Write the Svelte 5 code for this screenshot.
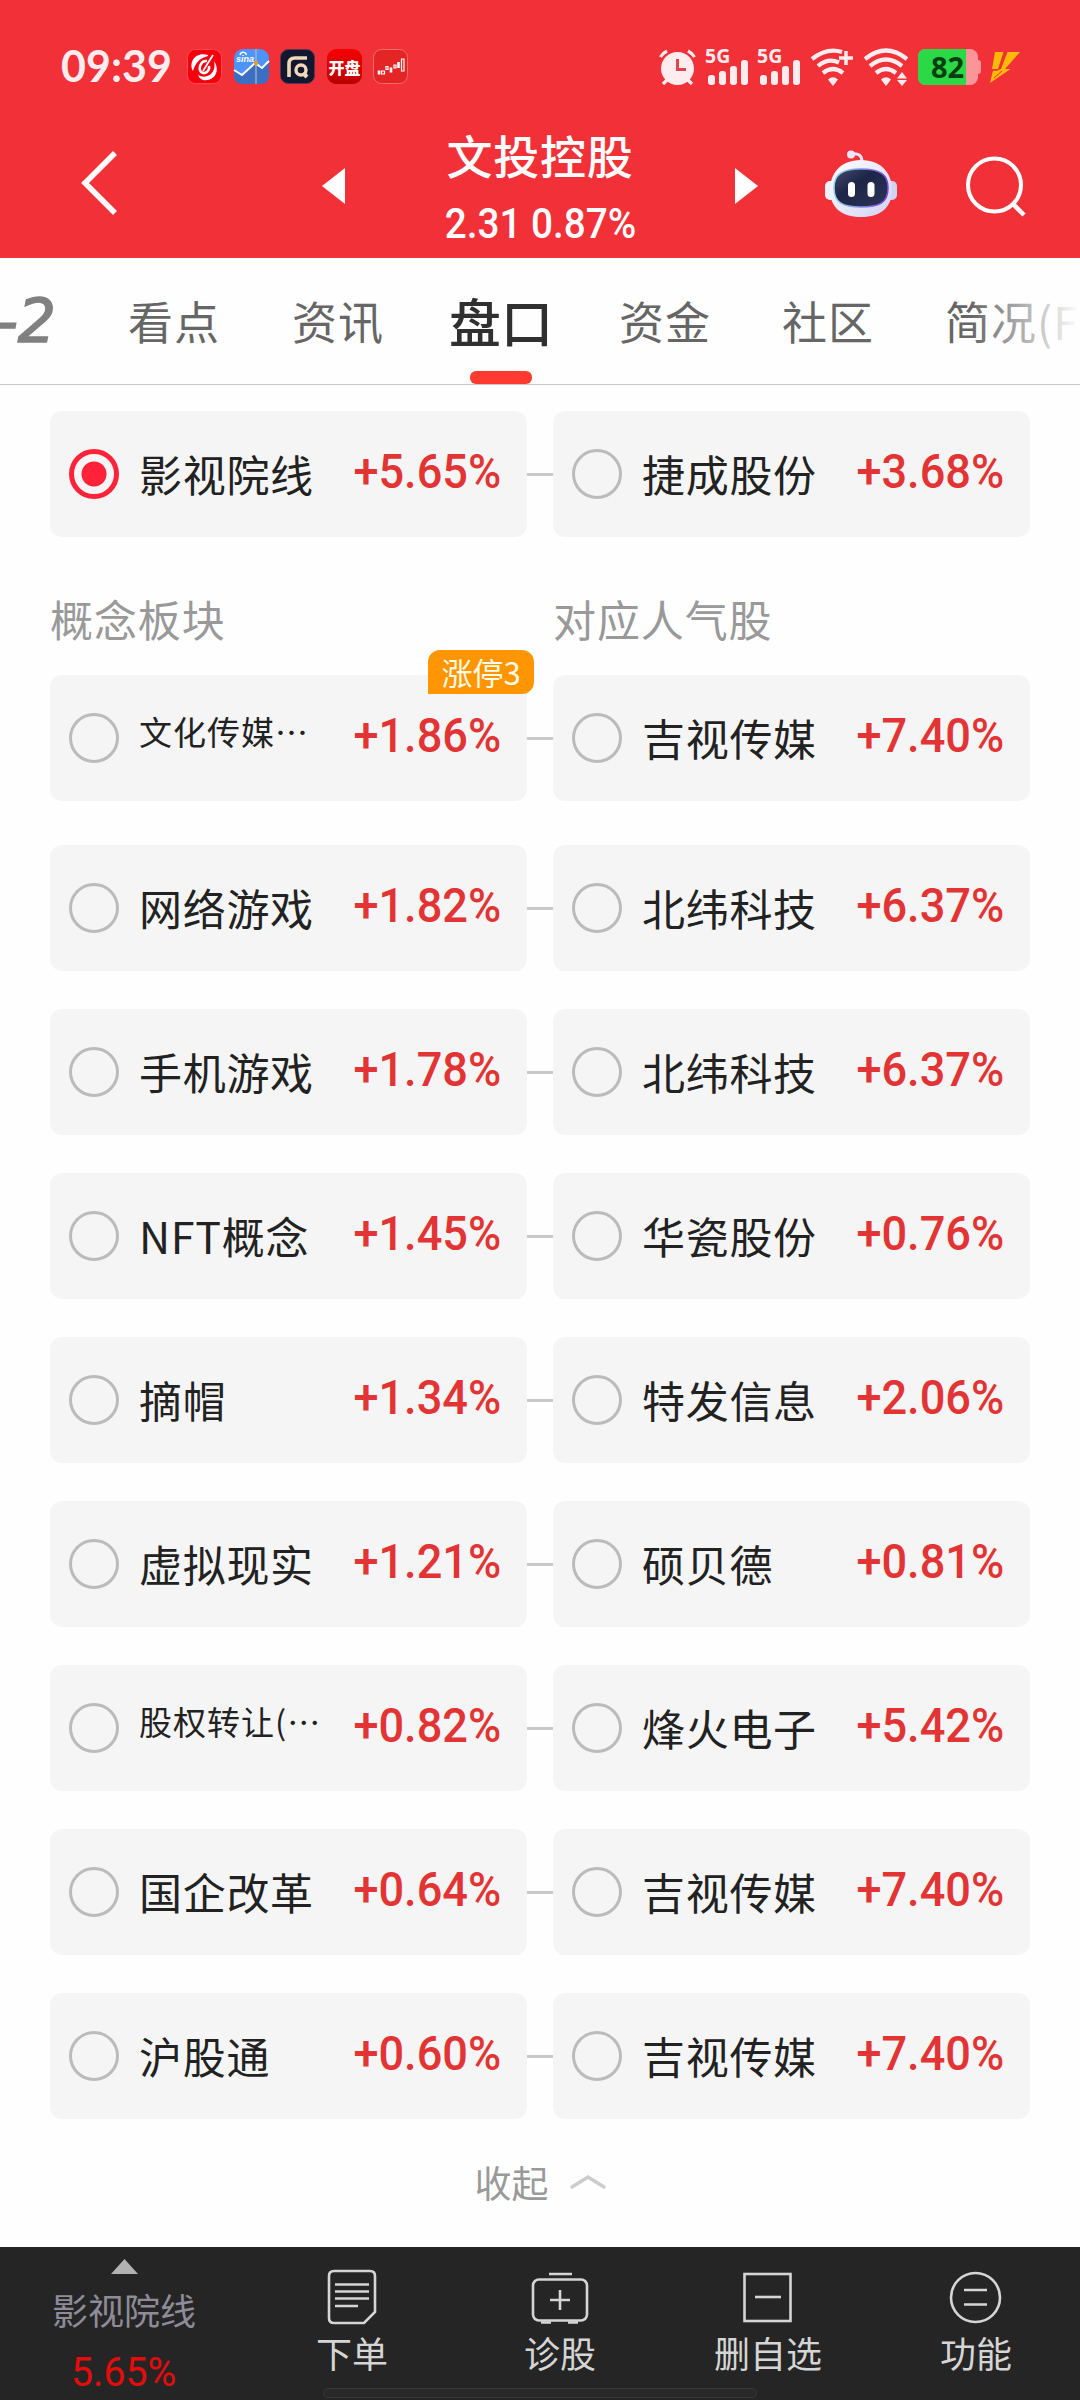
<script>
    // Sector + leading stock pairs, in display order
    const top = { name: '影视院线', pct: '+5.65%', stock: '捷成股份', stockPct: '+3.68%', active: true };

    const concepts = [
        { name: '文化传媒⋯', pct: '+1.86%', stock: '吉视传媒', stockPct: '+7.40%', small: true, badge: '涨停3' },
        { name: '网络游戏', pct: '+1.82%', stock: '北纬科技', stockPct: '+6.37%' },
        { name: '手机游戏', pct: '+1.78%', stock: '北纬科技', stockPct: '+6.37%' },
        { name: 'NFT概念', pct: '+1.45%', stock: '华瓷股份', stockPct: '+0.76%' },
        { name: '摘帽', pct: '+1.34%', stock: '特发信息', stockPct: '+2.06%' },
        { name: '虚拟现实', pct: '+1.21%', stock: '硕贝德', stockPct: '+0.81%' },
        { name: '股权转让(⋯', pct: '+0.82%', stock: '烽火电子', stockPct: '+5.42%', small: true },
        { name: '国企改革', pct: '+0.64%', stock: '吉视传媒', stockPct: '+7.40%' },
        { name: '沪股通', pct: '+0.60%', stock: '吉视传媒', stockPct: '+7.40%' }
    ];

    const tabs = ['看点', '资讯', '盘口', '资金', '社区', '简况(F'];
    const current = '盘口';
</script>

{#snippet card(name, pct, active, small, badge)}
    <div class="card">
        <span class="radio" class:active></span>
        <span class="name" class:small>{name}</span>
        <span class="pct"><span class="num">{pct}</span></span>
        {#if badge}<span class="badge">{badge}</span>{/if}
    </div>
{/snippet}

{#snippet pair(item)}
    <div class="pair">
        {@render card(item.name, item.pct, item.active, item.small, item.badge)}
        <span class="link"></span>
        {@render card(item.stock, item.stockPct, false, false, null)}
    </div>
{/snippet}

{#snippet signal()}
    <svg class="signal" width="42" height="36" viewBox="0 0 42 36">
        <text x="-1" y="14" class="net">5G</text>
        <rect x="2" y="26" width="7" height="10" rx="3" />
        <rect x="13" y="22" width="7" height="14" rx="3" />
        <rect x="24" y="17" width="7" height="19" rx="3" />
        <rect x="35" y="11" width="7" height="25" rx="3" />
    </svg>
{/snippet}

<div class="screen">
    <!-- Red header: status bar and stock title -->
    <header>
        <div class="status">
            <span class="clock">09:39</span>
            <div class="apps">
                <svg width="35" height="35" viewBox="0 0 35 35">
                    <rect x=".5" y=".5" width="34" height="34" rx="8" fill="#f5000f" stroke="#ff4a4a" />
                    <path d="M21 6 C9 2 1 13 6 22 C8 15 12 9 21 7Z" fill="#fff" />
                    <path d="M11 26 C20 31 30 24 27 12 C34 22 27 33 16 31 C13 30 12 28 11 26Z" fill="#fff" />
                    <path d="M20 12 C14 11 11 19 14 23 C18 26 23 22 22 17" fill="none" stroke="#fff" stroke-width="2.500" />
                    <path d="M26 6 L16 22" fill="none" stroke="#fff" stroke-width="1.800" />
                </svg>
                <svg width="35" height="35" viewBox="0 0 35 35">
                    <rect width="35" height="35" rx="9" fill="#4c94fb" />
                    <path d="M0 21 L8 26 L21 14 L28 19 L35 12 V26 Q35 35 26 35 H9 Q0 35 0 26Z" fill="#3a6fc4" />
                    <path d="M0 21 L8 26 L21 14 L28 19 L35 12" fill="none" stroke="#fff" stroke-width="2" />
                    <path d="M22 0V35" stroke="#c9c5b0" />
                    <circle cx="22" cy="14" r="2.200" fill="#f39a1e" />
                    <path d="M6 6c1-4 7-3 6 0" fill="none" stroke="#fff" stroke-width="1.500" />
                    <text x="2" y="13" class="sina">sina</text>
                </svg>
                <svg width="35" height="35" viewBox="0 0 35 35">
                    <rect x=".5" y=".5" width="34" height="34" rx="8" fill="#10182f" stroke="#5c3350" />
                    <path d="M9 28V15Q9 9 15 9H27" fill="none" stroke="#f3d5b9" stroke-width="3.600" />
                    <circle cx="21" cy="21" r="5" fill="none" stroke="#f3d5b9" stroke-width="3.400" />
                    <path d="M23 24 L27 28" stroke="#f3d5b9" stroke-width="4" />
                </svg>
                <svg width="35" height="35" viewBox="0 0 35 35">
                    <defs>
                        <linearGradient id="kp" x1="0" y1="0" x2="0" y2="1">
                            <stop offset="0" stop-color="#f80000" />
                            <stop offset="1" stop-color="#b80000" />
                        </linearGradient>
                    </defs>
                    <rect width="35" height="35" rx="9" fill="url(#kp)" />
                    <text x="17.500" y="25" text-anchor="middle" class="kaipan">开盘</text>
                </svg>
                <svg width="35" height="35" viewBox="0 0 35 35">
                    <rect x=".5" y=".5" width="34" height="34" rx="8" fill="#e42526" stroke="#f56a6a" />
                    <path d="M6 21.500v4M18 18.500v5M25.500 13v6" stroke="#fff" stroke-width="2.600" />
                    <path d="M8.500 22h3v3h-3zM13 17.500h2v3h-2zM21 16h2v3h-2zM28.500 10h2.500v12h-2.500z" fill="none" stroke="#fff" stroke-width="1.200" />
                </svg>
            </div>

            <div class="sys">
                <svg class="alarm" width="37" height="37" viewBox="0 0 37 37">
                    <circle cx="18.500" cy="19.500" r="16.500" fill="#ffecee" />
                    <path d="M1.500 8 Q4 4 8 2 M35.500 8 Q33 4 29 2 M4 35 L9 30 M33 35 L28 30" stroke="#ffecee" stroke-width="3.200" fill="none" />
                    <path d="M18.500 10V20.500H27" stroke="#e2444c" stroke-width="3" fill="none" />
                </svg>
                {@render signal()}
                {@render signal()}
                <svg class="wifi" width="43" height="37" viewBox="0 0 43 37">
                    <path d="M1 10 Q16 -2 31 3 M7 17 Q17 8.500 28 13.500 M12 24 Q22 16 32 24" fill="none" stroke="#ffecee" stroke-width="4.200" />
                    <path d="M17 30.500 Q22 26 27 30.500 L22 37Z" fill="#ffecee" />
                    <path d="M28 9H42M35 2V16" stroke="#ffecee" stroke-width="3.500" />
                </svg>
                <svg class="wifi2" width="45" height="37" viewBox="0 0 45 37">
                    <path d="M1 10 Q22 -7 43 10 M6 17 Q22 4 38 17 M12 24 Q22 16 32 24" fill="none" stroke="#ffecee" stroke-width="4.200" />
                    <path d="M17 30.500 Q22 26 27 30.500 L22 37Z M33 29.500 L38 23 L43 29.500Z M33 31 H43 L38 37Z" fill="#ffecee" />
                </svg>
                <svg class="battery" width="64" height="36" viewBox="0 0 64 36">
                    <rect width="60" height="36" rx="8" fill="#fb9599" />
                    <rect x="57" y="11" width="6" height="14" rx="3" fill="#fb9599" />
                    <path d="M8 0H48V36H8Q0 36 0 28V8Q0 0 8 0Z" fill="#2bd845" />
                    <text x="29.500" y="28.500" text-anchor="middle" class="level">82</text>
                </svg>
                <svg class="bolt" width="30" height="31" viewBox="0 0 30 31">
                    <path d="M5 0H13.500L8 17H2Z M17.500 0H30L15 17H20.500L0 31L3 18.500H7L11 17Z" fill="#ffb907" />
                    <path d="M3 18H8M12 19L4 26" stroke="#f12f38" stroke-width="1" />
                </svg>
            </div>
        </div>

        <div class="title-bar">
            <svg class="back" width="37" height="66" viewBox="0 0 37 66">
                <path d="M34 3 L4 33 L34 63" fill="none" stroke="#fff" stroke-width="5.500" />
            </svg>
            <svg class="prev" width="23" height="36" viewBox="0 0 23 36"><path d="M23 0V36L0 18Z" fill="#fff" /></svg>
            <div class="stock">
                <h1>文投控股</h1>
                <p><span class="num">2.31 0.87%</span></p>
            </div>
            <svg class="next" width="23" height="36" viewBox="0 0 23 36"><path d="M0 0V36L23 18Z" fill="#fff" /></svg>
            <svg class="robot" width="72" height="68" viewBox="0 0 72 68">
                <defs>
                    <linearGradient id="shell" x1="0" y1="0" x2="1" y2="1">
                        <stop offset="0" stop-color="#ffffff" />
                        <stop offset="1" stop-color="#d3d2f3" />
                    </linearGradient>
                    <linearGradient id="rim" x1="0" y1="0" x2="1" y2="0">
                        <stop offset="0" stop-color="#8fd4f5" />
                        <stop offset="1" stop-color="#7b46dc" />
                    </linearGradient>
                    <linearGradient id="visor" x1="0" y1="0" x2="1" y2="1">
                        <stop offset="0" stop-color="#454d70" />
                        <stop offset=".4" stop-color="#1d2647" />
                        <stop offset="1" stop-color="#2c3458" />
                    </linearGradient>
                </defs>
                <path d="M26 4 Q37 2 37 12" fill="none" stroke="#e9e6fa" stroke-width="3" />
                <circle cx="26" cy="4.500" r="4" fill="#e9e6fa" />
                <rect x="0" y="31" width="12" height="19" rx="5" fill="#f0f0ff" />
                <rect x="60" y="31" width="12" height="19" rx="5" fill="#d2d0f3" />
                <path d="M36 10 C57 10 67 24 67 40 C67 57 56 67 36 67 C16 67 5 57 5 40 C5 24 15 10 36 10Z" fill="url(#shell)" />
                <path d="M36 19 C56 19 63 25 63 38 C63 53 54 57 36 57 C18 57 9 53 9 38 C9 25 16 19 36 19Z" fill="url(#visor)" stroke="url(#rim)" stroke-width="1.500" />
                <rect x="23" y="32" width="7" height="15" rx="3.500" fill="#fff" />
                <rect x="42.500" y="32" width="7" height="15" rx="3.500" fill="#fff" />
            </svg>
            <svg class="search" width="60" height="62" viewBox="0 0 60 62">
                <circle cx="28.500" cy="29" r="26.500" fill="none" stroke="#fff" stroke-width="4" />
                <path d="M47 48 L58 59" stroke="#fff" stroke-width="4.500" />
            </svg>
        </div>
    </header>

    <!-- Section tabs -->
    <nav class="tabs">
        <span class="level2">-2</span>
        {#each tabs as tab}
            <span class="tab" class:current={tab === current}>{tab}</span>
        {/each}
    </nav>

    <main>
        {@render pair(top)}

        <div class="labels">
            <span>概念板块</span>
            <span>对应人气股</span>
        </div>

        <div class="list">
            {#each concepts as item}
                {@render pair(item)}
            {/each}
        </div>

        <div class="collapse">
            <span>收起</span>
            <svg width="36" height="14" viewBox="0 0 36 14">
                <path d="M2 12 L18 2 L34 12" fill="none" stroke="#ccc" stroke-width="3.500" stroke-linecap="round" />
            </svg>
        </div>
    </main>

    <!-- Bottom toolbar -->
    <footer>
        <div class="sector">
            <svg width="27" height="15" viewBox="0 0 27 15"><path d="M13.500 0L27 15H0Z" fill="#b2b2b2" /></svg>
            <span class="sector-name">影视院线</span>
            <span class="sector-pct"><span class="num">5.65%</span></span>
        </div>
        <div class="tool">
            <svg width="58" height="56" viewBox="0 0 58 56">
                <path d="M11 2H47Q52 2 52 7V43L41 54H11Q6 54 6 49V7Q6 2 11 2Z" />
                <path d="M12 15.500H46M12 22.500H46M12 29.500H46M12 37H35" />
            </svg>
            <span>下单</span>
        </div>
        <div class="tool">
            <svg width="58" height="56" viewBox="0 0 58 56">
                <rect x="2" y="10.500" width="54" height="41" rx="6" />
                <path d="M18 5H41M29 21V41M19 31H39" />
                <path d="M10 53.500H20M37 53.500H47" />
            </svg>
            <span>诊股</span>
        </div>
        <div class="tool">
            <svg width="58" height="56" viewBox="0 0 58 56">
                <rect x="5.500" y="5" width="46" height="47" />
                <path d="M16 28H42" />
            </svg>
            <span>删自选</span>
        </div>
        <div class="tool">
            <svg width="58" height="56" viewBox="0 0 58 56">
                <circle cx="28.500" cy="28.500" r="24.500" />
                <path d="M17 21H40M17 35.500H40" />
            </svg>
            <span>功能</span>
        </div>
        <div class="home"></div>
    </footer>
</div>

<style>
    :global(body) {
        margin: 0;
        background: #fff;
    }

    .screen {
        width: 1080px;
        height: 2400px;
        overflow: hidden;
        display: flex;
        flex-direction: column;
        background: #fefefe;
        font-family: Roboto, "Noto Sans CJK SC", sans-serif;
        color: #222;
    }

    svg { display: block; flex-shrink: 0; overflow: visible; }

    /* DIN-like narrow figures */
    .num {
        display: inline-block;
        font-family: Roboto, sans-serif;
        white-space: nowrap;
    }

    /* ===== HEADER ===== */
    header {
        height: 258px;
        flex-shrink: 0;
        background: #f23038;
    }

    .status {
        height: 134px;
        box-sizing: border-box;
        padding: 49px 60px 0 61px;
        display: flex;
        align-items: flex-start;
    }

    .clock {
        width: 126px;
        font: 700 43px/34px Lato, sans-serif;
        color: #ffecee;
    }

    .apps { display: flex; gap: 11.5px; }

    .sina { font: italic 700 9px "Liberation Sans", sans-serif; fill: #fff; }
    .kaipan { font: 900 16px "Noto Sans CJK SC", sans-serif; fill: #fff; }

    .sys { margin-left: auto; display: flex; }
    .signal { margin-left: 10px; fill: #ffecee; }
    .net { font: 700 19.5px "Noto Sans", sans-serif; }
    .wifi { margin-left: 11px; }
    .wifi2 { margin-left: 10px; }
    .battery { margin-left: 9px; }
    .level { font: 700 29px "Noto Sans", sans-serif; fill: #063f10; }
    .bolt { margin: 3px 0 0 8px; }

    .title-bar {
        display: flex;
        align-items: flex-start;
        padding-left: 81px;
    }

    .back { margin-top: 16px; }
    .prev { margin: 34px 0 0 204px; }
    .next { margin-top: 34px; }
    .robot { margin: 16px 0 0 67px; }
    .search { margin: 22px 0 0 69px; }

    .stock {
        width: 390px;
        text-align: center;
        color: #fff;
    }
    .stock h1 {
        margin: -5px 0 0;
        font: 500 46px/50px "Noto Sans CJK SC", sans-serif;
        letter-spacing: 0.7px;
    }
    .stock p {
        margin: 19px 0 0;
        font-size: 43px;
        line-height: 50px;
        font-weight: 500;
    }
    .stock .num { transform: scaleX(0.9); }

    /* ===== TABS ===== */
    .tabs {
        position: relative;
        height: 126px;
        flex-shrink: 0;
        display: flex;
        align-items: flex-start;
        border-bottom: 1px solid #c8c8c8;
        font: 400 45px/126px "Noto Sans CJK SC", sans-serif;
        letter-spacing: 1px;
        color: #666;
        white-space: nowrap;
        overflow: hidden;
    }
    .tabs::after {
        content: '';
        position: absolute;
        right: 0;
        width: 110px;
        height: 120px;
        background: linear-gradient(to right, rgba(254, 254, 254, 0), #fefefe);
    }

    .level2 {
        width: 56px;
        margin-right: 72px;
        display: flex;
        justify-content: flex-end;
        font: italic 400 60px/126px "DejaVu Sans", sans-serif;
        letter-spacing: 0;
        -webkit-text-stroke: 1.5px #808080;
        color: #808080;
    }

    .tab { margin-right: 72px; }

    .tab.current {
        display: flex;
        flex-direction: column;
        align-items: center;
        margin: 0 66px 0 -7px;
        font-size: 52px;
        letter-spacing: 0;
        font-weight: 500;
        color: #303030;
    }
    .tab.current ~ .tab { margin-right: 71px; }
    .tab.current::after {
        content: '';
        width: 62px;
        height: 13px;
        margin-top: -13px;
        border-radius: 6px;
        background: #ff3a30;
    }

    /* ===== CARDS ===== */
    main {
        padding: 26px 50px 0;
        height: 1837px;
        box-sizing: content-box;
    }

    .pair { display: flex; align-items: center; }

    .link { width: 26px; height: 3px; background: #c8c8c8; }

    .card {
        position: relative;
        width: 477px;
        height: 126px;
        box-sizing: border-box;
        padding: 0 26px 0 19px;
        display: flex;
        align-items: center;
        border-radius: 12px;
        background: #f5f5f5;
    }

    .radio {
        width: 50px;
        height: 50px;
        box-sizing: border-box;
        flex-shrink: 0;
        border: 3px solid #bbb;
        border-radius: 50%;
    }
    .radio.active {
        border: 5px solid #ff2239;
        background: radial-gradient(circle, #ff2239 12px, transparent 13px);
    }

    .name {
        margin: -3px 0 0 20px;
        font: 400 43px/60px "Noto Sans CJK SC", sans-serif;
        letter-spacing: 0.7px;
        white-space: nowrap;
    }
    .name.small {
        margin-top: -14px;
        font-size: 33px;
        letter-spacing: 1px;
    }

    .pct {
        margin: -4px 0 0 auto;
        font-size: 48px;
        line-height: 60px;
        font-weight: 500;
        color: #e23434;
    }
    .pct .num { transform: scaleX(0.94); transform-origin: right; }

    .badge {
        position: absolute;
        right: -7px;
        top: -25px;
        width: 106px;
        height: 44px;
        border-radius: 12px 12px 12px 0;
        background: #ff9600;
        color: #fffbe6;
        font: 400 31px/43px "Noto Sans CJK SC", sans-serif;
        text-align: center;
    }

    .labels {
        height: 138px;
        box-sizing: border-box;
        padding-top: 51px;
        display: grid;
        grid-template-columns: 503px 1fr;
        font: 400 43px/60px "Noto Sans CJK SC", sans-serif;
        letter-spacing: 0.9px;
        color: #999;
    }

    .list {
        display: flex;
        flex-direction: column;
        gap: 38px;
    }
    .list .pair:first-child { margin-bottom: 6px; }

    .collapse {
        margin-top: 36px;
        display: flex;
        justify-content: center;
        align-items: center;
        gap: 21px;
        font: 400 37px/54px "Noto Sans CJK SC", sans-serif;
        color: #999;
    }

    /* ===== BOTTOM BAR ===== */
    footer {
        position: relative;
        height: 153px;
        flex-shrink: 0;
        display: grid;
        grid-template-columns: 248px repeat(4, 208px);
        background: #252525;
    }

    .sector, .tool {
        display: flex;
        flex-direction: column;
        align-items: center;
        font: 400 36px/44px "Noto Sans CJK SC", sans-serif;
    }

    .sector { padding-top: 12px; }
    .sector-name { margin-top: 13px; color: #8e8c98; }
    .sector-pct {
        margin-top: 16px;
        font-size: 40px;
        color: #e60c0c;
    }
    .sector-pct .num { transform: scaleX(0.98); }

    .tool { padding-top: 22px; color: #d5d5d5; }
    .tool svg { fill: none; stroke: #d5d5d5; stroke-width: 2.6px; }
    .tool span { margin-top: 5px; }

    .home {
        position: absolute;
        left: 323px;
        bottom: 2px;
        width: 434px;
        height: 10px;
        box-sizing: border-box;
        border: 1px solid #363636;
        border-radius: 5px;
        background: #292929;
    }
</style>
